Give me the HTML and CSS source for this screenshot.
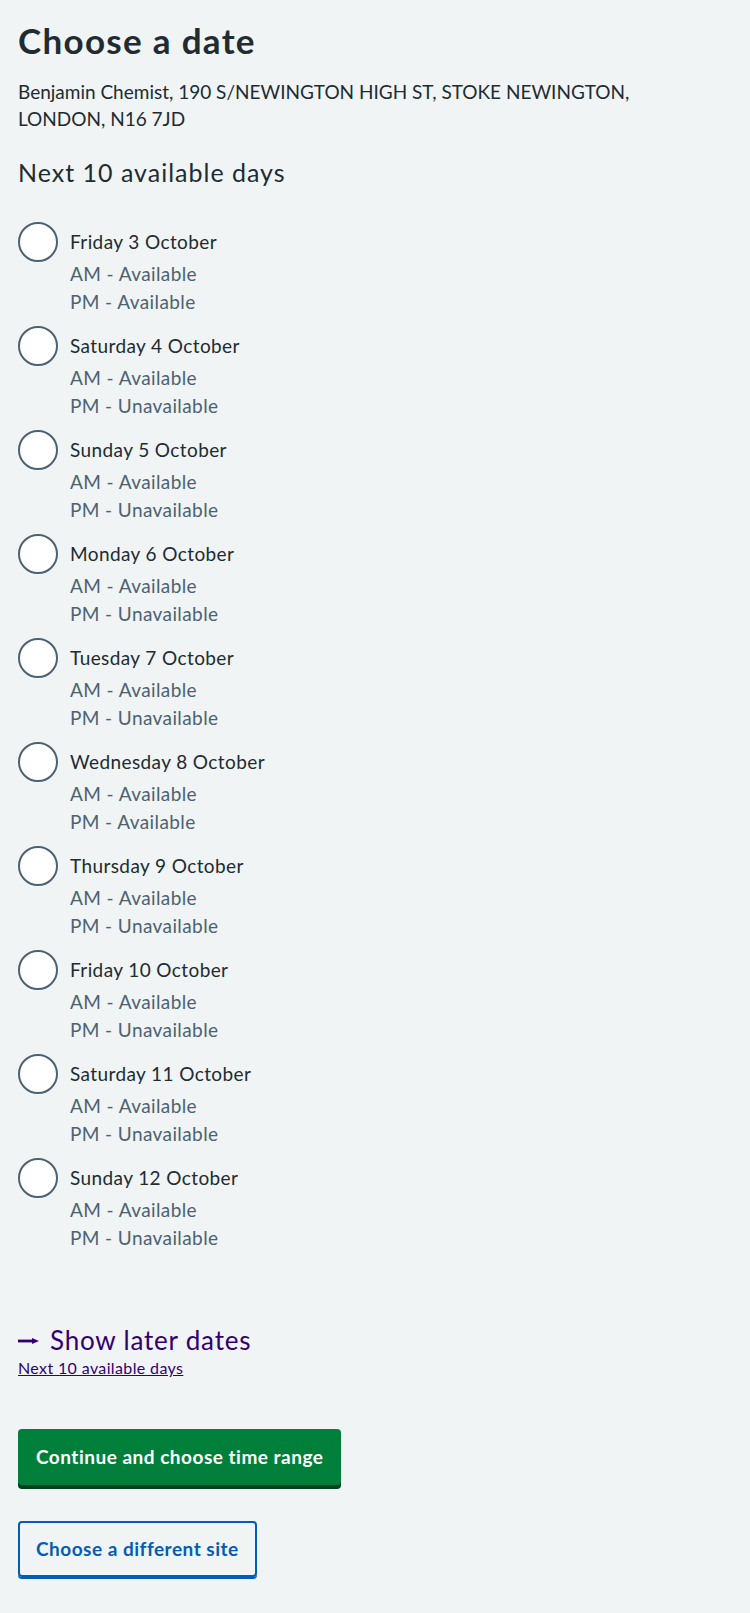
FILE: index.html
```html
<!DOCTYPE html>
<html lang="en">
<head>
<meta charset="utf-8">
<title>Choose a date</title>
<link rel="stylesheet" href="styles.css">
</head>
<body>
<main class="page">
  <h1 class="title">Choose a date</h1>
  <p class="address">Benjamin Chemist, 190 S/NEWINGTON HIGH ST, STOKE NEWINGTON, LONDON, N16 7JD</p>
  <fieldset class="fieldset">
    <legend class="legend">Next 10 available days</legend>
    <div class="radios">
      <div class="radio-item"><span class="radio-circle"></span><div class="radio-text"><div class="radio-label">Friday 3 October</div><div class="radio-hint">AM - Available</div><div class="radio-hint">PM - Available</div></div></div>
      <div class="radio-item"><span class="radio-circle"></span><div class="radio-text"><div class="radio-label">Saturday 4 October</div><div class="radio-hint">AM - Available</div><div class="radio-hint">PM - Unavailable</div></div></div>
      <div class="radio-item"><span class="radio-circle"></span><div class="radio-text"><div class="radio-label">Sunday 5 October</div><div class="radio-hint">AM - Available</div><div class="radio-hint">PM - Unavailable</div></div></div>
      <div class="radio-item"><span class="radio-circle"></span><div class="radio-text"><div class="radio-label">Monday 6 October</div><div class="radio-hint">AM - Available</div><div class="radio-hint">PM - Unavailable</div></div></div>
      <div class="radio-item"><span class="radio-circle"></span><div class="radio-text"><div class="radio-label">Tuesday 7 October</div><div class="radio-hint">AM - Available</div><div class="radio-hint">PM - Unavailable</div></div></div>
      <div class="radio-item"><span class="radio-circle"></span><div class="radio-text"><div class="radio-label">Wednesday 8 October</div><div class="radio-hint">AM - Available</div><div class="radio-hint">PM - Available</div></div></div>
      <div class="radio-item"><span class="radio-circle"></span><div class="radio-text"><div class="radio-label">Thursday 9 October</div><div class="radio-hint">AM - Available</div><div class="radio-hint">PM - Unavailable</div></div></div>
      <div class="radio-item"><span class="radio-circle"></span><div class="radio-text"><div class="radio-label">Friday 10 October</div><div class="radio-hint">AM - Available</div><div class="radio-hint">PM - Unavailable</div></div></div>
      <div class="radio-item"><span class="radio-circle"></span><div class="radio-text"><div class="radio-label">Saturday 11 October</div><div class="radio-hint">AM - Available</div><div class="radio-hint">PM - Unavailable</div></div></div>
      <div class="radio-item"><span class="radio-circle"></span><div class="radio-text"><div class="radio-label">Sunday 12 October</div><div class="radio-hint">AM - Available</div><div class="radio-hint">PM - Unavailable</div></div></div>
    </div>
  </fieldset>
  <div class="pager">
    <div class="pager-title"><svg class="pager-arrow" width="21" height="6" viewBox="0 0 21 6" aria-hidden="true"><rect x="0" y="1.6" width="15" height="2.8" fill="#330072"/><path d="M14 0 L21 3 L14 6 Z" fill="#330072"/></svg>Show later dates</div>
    <a class="pager-link" href="#">Next 10 available days</a>
  </div>
  <div class="actions">
    <button class="button button-primary" type="button">Continue and choose time range</button>
    <button class="button button-secondary" type="button">Choose a different site</button>
  </div>
</main>
</body>
</html>
```

FILE: styles.css
```css
html, body {
  margin: 0;
  padding: 0;
  background: #f0f4f5;
}

body {
  font-family: Lato, "Noto Sans", sans-serif;
  color: #212b32;
}

.page {
  padding: 20px 18px 20px;
}

.title {
  margin: 0 0 18px;
  font-size: 35px;
  line-height: 40px;
  font-weight: 700;
  letter-spacing: 1.3px;
}

.address {
  margin: 0 0 24px;
  max-width: 680px;
  font-size: 19px;
  line-height: 27px;
}

.fieldset {
  border: 0;
  margin: 0;
  padding: 0;
  min-width: 0;
}

.legend {
  padding: 0;
  margin: 0 0 34px;
  font-size: 25px;
  line-height: 32px;
  font-weight: 400;
  letter-spacing: 1px;
  float: left;
  width: 100%;
}

.radios {
  clear: both;
  display: flex;
  flex-direction: column;
  margin-bottom: 62px;
}

.radio-item {
  display: flex;
  align-items: flex-start;
  margin-bottom: 10px;
}

.radio-circle {
  flex: 0 0 40px;
  width: 40px;
  height: 40px;
  box-sizing: border-box;
  border: 2px solid #4c6272;
  border-radius: 50%;
  background: #ffffff;
}

.radio-text {
  padding-left: 12px;
  font-size: 19px;
  line-height: 28px;
  letter-spacing: 0.4px;
}

.radio-label {
  padding: 6px 0 4px;
  color: #212b32;
}

.radio-hint {
  color: #4c6272;
}

.pager {
  display: flex;
  flex-direction: column;
  align-items: flex-start;
  color: #330072;
}

.pager-title {
  font-size: 26px;
  line-height: 32px;
  letter-spacing: 0.8px;
}

.pager-arrow {
  vertical-align: 6px;
  margin-right: 11px;
}

.pager-link {
  font-size: 16px;
  line-height: 24px;
  color: #330072;
  text-decoration: underline;
  letter-spacing: 0.37px;
}

.actions {
  display: flex;
  flex-direction: column;
  align-items: flex-start;
  gap: 36px;
  margin-top: 49px;
}

.button {
  font-family: Lato, "Noto Sans", sans-serif;
  font-size: 19px;
  line-height: 28px;
  font-weight: 700;
  letter-spacing: 0.5px;
  padding: 12px 16px;
  border-radius: 4px;
  margin: 0;
  cursor: pointer;
}

.button-primary {
  background: #007f3b;
  color: #ffffff;
  border: 2px solid transparent;
  box-shadow: 0 4px 0 #00401e;
}

.button-secondary {
  background: transparent;
  color: #005eb8;
  border: 2px solid #005eb8;
  box-shadow: 0 2px 0 #005eb8;
}
```
